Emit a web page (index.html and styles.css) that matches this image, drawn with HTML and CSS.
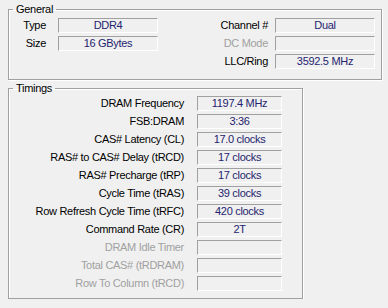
FILE: index.html
```html
<!DOCTYPE html>
<html lang="en">
<head>
  <meta charset="UTF-8">
  <meta name="viewport" content="width=device-width, initial-scale=1.0">
  <title>Memory</title>
  <link rel="stylesheet" href="styles.css">
</head>
<body>
  <fieldset class="group general">
    <legend>General</legend>
    <div class="general-grid">
      <span class="label">Type</span>
      <span class="field">DDR4</span>
      <span class="label">Channel #</span>
      <span class="field">Dual</span>

      <span class="label">Size</span>
      <span class="field">16 GBytes</span>
      <span class="label off">DC Mode</span>
      <span class="field"></span>

      <span></span>
      <span></span>
      <span class="label">LLC/Ring</span>
      <span class="field">3592.5 MHz</span>
    </div>
  </fieldset>

  <fieldset class="group timings">
    <legend>Timings</legend>
    <div class="timings-grid">
      <span class="label">DRAM Frequency</span>
      <span class="field">1197.4 MHz</span>
      <span class="label">FSB:DRAM</span>
      <span class="field">3:36</span>
      <span class="label">CAS# Latency (CL)</span>
      <span class="field">17.0 clocks</span>
      <span class="label">RAS# to CAS# Delay (tRCD)</span>
      <span class="field">17 clocks</span>
      <span class="label">RAS# Precharge (tRP)</span>
      <span class="field">17 clocks</span>
      <span class="label">Cycle Time (tRAS)</span>
      <span class="field">39 clocks</span>
      <span class="label">Row Refresh Cycle Time (tRFC)</span>
      <span class="field">420 clocks</span>
      <span class="label">Command Rate (CR)</span>
      <span class="field">2T</span>
      <span class="label off">DRAM Idle Timer</span>
      <span class="field"></span>
      <span class="label off">Total CAS# (tRDRAM)</span>
      <span class="field"></span>
      <span class="label off">Row To Column (tRCD)</span>
      <span class="field"></span>
    </div>
  </fieldset>
</body>
</html>
```

FILE: styles.css
```css
body {
  margin: 0;
  padding: 2px 6px 0 8px;
  background: #f0f0f0;
  font-family: "Liberation Sans", Arial, sans-serif;
  font-size: 11px;
  letter-spacing: -0.3px;
  color: #000;
}
.group {
  margin: 0;
  padding: 0;
  border: 1px solid #a0a0a0;
  box-shadow: inset 1px 1px 0 #fff, 1px 1px 0 #fff;
}
.group legend {
  margin-left: 4px;
  padding: 0 3px;
  line-height: 14px;
}
.general {
  width: 374px;
  box-sizing: border-box;
}
.timings {
  width: 295px;
  box-sizing: border-box;
  margin-top: 1px;
}
.general-grid {
  display: grid;
  grid-template-columns: 49px 100px 1fr 100px;
  grid-auto-rows: 15px;
  row-gap: 3px;
  padding: 2px 6px 10px 0;
}
.timings-grid {
  display: grid;
  grid-template-columns: 1fr 85px;
  grid-auto-rows: 15px;
  row-gap: 3px;
  padding: 1px 20px 7px 0;
}
.label {
  text-align: right;
  line-height: 15px;
  white-space: nowrap;
}
.general-grid .label {
  padding-right: 7px;
}
.general-grid .label:first-child,
.general-grid .label:nth-child(5) {
  padding-right: 12px;
}
.timings-grid .label {
  padding-right: 13px;
}
.label.off {
  color: #a0a0a0;
}
.field {
  box-sizing: border-box;
  height: 15px;
  border-top: 1px solid #a0a0a0;
  border-left: 1px solid #a0a0a0;
  border-right: 1px solid #fff;
  border-bottom: 1px solid #fff;
  text-align: center;
  line-height: 13px;
  color: #24246e;
}
```
